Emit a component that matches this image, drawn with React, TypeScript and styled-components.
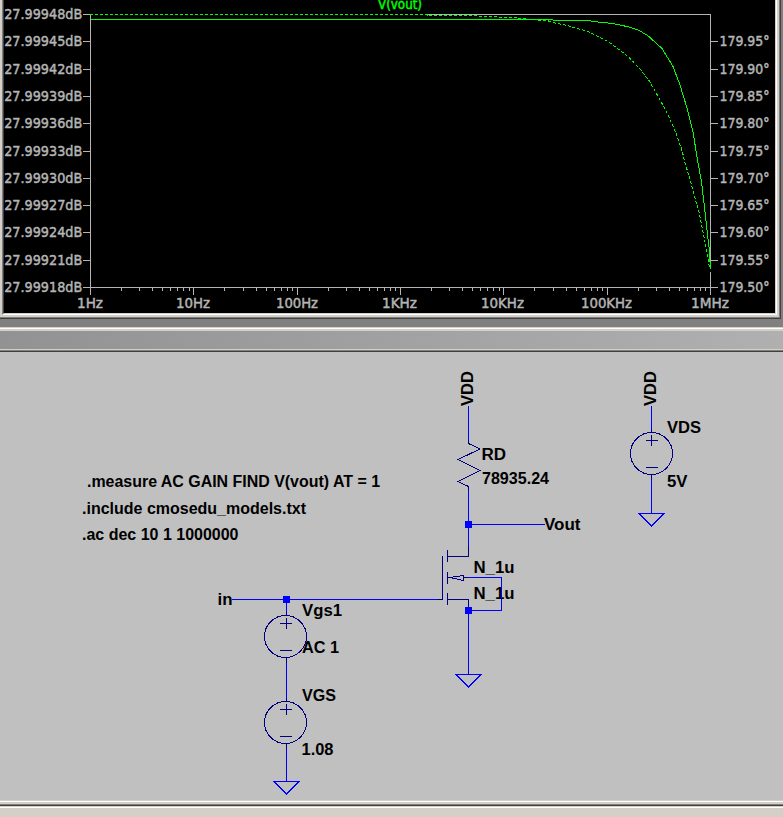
import React from "react";
import styled, { createGlobalStyle } from "styled-components";

const GlobalStyle = createGlobalStyle`
  html, body { margin: 0; padding: 0; background: #808080; overflow: hidden; }
`;

const Desktop = styled.main`
  width: 783px;
  height: 817px;
  display: flex;
  flex-direction: column;
  background: #808080;
  overflow: hidden;
`;

const PlotWindow = styled.section`
  box-sizing: border-box;
  width: 781px;
  height: 319px;
  flex: none;
  border-right: 1px solid #404040;
  border-bottom: 1px solid #404040;
`;

const PlotFrame = styled.div`
  box-sizing: border-box;
  width: 780px;
  height: 318px;
  background: #d4d0c8;
  border-right: 1px solid #808080;
  border-bottom: 1px solid #808080;
  padding: 0 2px 2px 2px;
`;

const PlotBevel = styled.div`
  box-sizing: border-box;
  width: 775px;
  height: 315px;
  border-left: 1px solid #808080;
  border-right: 1px solid #fff;
  border-bottom: 1px solid #fff;
`;

const PlotPane = styled.div`
  box-sizing: border-box;
  width: 773px;
  height: 314px;
  background: #000;
  border-left: 1px solid #404040;
  border-right: 1px solid #d4d0c8;
  border-bottom: 1px solid #d4d0c8;
`;

const Drawing = styled.svg`
  display: block;
  shape-rendering: crispEdges;
`;

const AxisText = styled.text.attrs({ lengthAdjust: "spacingAndGlyphs" })`
  font: 14px "DejaVu Sans", Verdana, sans-serif;
  fill: #b4b4b4;
  stroke: #b4b4b4;
  stroke-width: 0.5px;
`;

const TraceText = styled(AxisText)`
  fill: #00ff00;
  stroke: #00ff00;
`;

const SchematicWindow = styled.section`
  display: flex;
  flex-direction: column;
  margin-top: 8px;
  flex: none;
`;

const Edge = styled.div<{ $color: string; $size?: number }>`
  height: ${(p) => p.$size ?? 1}px;
  background: ${(p) => p.$color};
  flex: none;
`;

const TitleBar = styled.header`
  height: 18px;
  background: linear-gradient(90deg, #929292, #b0b0b0);
`;

const SchematicPane = styled.div`
  height: 448px;
  background: #c0c0c0;
`;

const Label = styled.text.attrs({ lengthAdjust: "spacingAndGlyphs" })`
  font: bold 16px "Liberation Sans", Arial, sans-serif;
  fill: #000;
`;

const StatusBar = styled.footer`
  height: 9px;
  background: #d4d0c8;
`;

const rows = [14, 41, 69, 96, 123, 151, 178, 205, 232, 260, 287];
const gains = ["48", "45", "42", "39", "36", "33", "30", "27", "24", "21", "18"];
const phases = ["95", "90", "85", "80", "75", "70", "65", "60", "55", "50"];

// frequency label, tick x, text start, text width
const decades: [string, number, number, number][] = [
  ["1Hz", 90, 77, 26],
  ["10Hz", 193, 176, 34],
  ["100Hz", 297, 276, 42],
  ["1KHz", 400, 382, 35],
  ["10KHz", 503, 481, 43],
  ["100KHz", 607, 581, 51],
  ["1MHz", 710, 691, 38],
];

function BodePlot() {
  const minor: number[] = [];
  for (let d = 0; d < 6; d++)
    for (let n = 2; n < 10; n++)
      minor.push(Math.floor(90.5 + (d + Math.log10(n)) * 103.33) + 0.5);
  return (
    <Drawing width="771" height="313" viewBox="4 0 771 313">
      <g stroke="#b4b4b4" fill="none">
        <path d="M90.5 15V294 M427 14.5H711 M710.5 14V269 M710.5 272V294 M83 287.5H717" />
        {rows.map((y, i) => (
          <path key={y} d={`M83 ${y + 0.5}h7${i ? "M711 " + (y + 0.5) + "h7" : ""}`} />
        ))}
        {minor.map((x) => (
          <path key={x} d={`M${x} 288v3`} />
        ))}
        {decades.map(([name, x]) => (
          <path key={name} d={`M${x + 0.5} 288v7`} />
        ))}
      </g>
      {rows.map((y, i) => (
        <AxisText key={y} x="4.2" y={y + 5} textLength="78">{`27.999${gains[i]}dB`}</AxisText>
      ))}
      {phases.map((p, i) => (
        <AxisText key={p} x="719.5" y={rows[i + 1] + 5} textLength="50">{`179.${p}°`}</AxisText>
      ))}
      {decades.map(([name, , x, w]) => (
        <AxisText key={name} x={x} y="308" textLength={w}>{name}</AxisText>
      ))}
      <TraceText x="378" y="9" textLength="44">V(vout)</TraceText>
      <g stroke="#00ff00" fill="none">
        <path d="M91 19.5H553 M553 20.5H591" />
        <path d="M591 21.5L605 22.5L618 24.5L628 26.8L638 29.8L648 35.8L662 48.5L673 66.5L680 85L687 108L693 132L697.5 160L701.5 182L704.5 207L707 230L709 247L710.5 269" />
        <path
          strokeDasharray="3 2"
          d="M90 14.5H427V15.5H476L478 16.5H496L499 17.5H517L520 18.5L528 19L541 20.5H547L553 22.5L567 25.5L588 31.5L608 41.5L623 52.5L629 57.5L640 69L649 80.5L658.5 97L667 113L672.5 125L677 136L681.5 149L683.7 157L684.7 162L690.3 180L695.5 200L699.5 214L703 232L706 247L709.5 268"
        />
      </g>
    </Drawing>
  );
}

// `shift` moves the body by a pixel against its leads
function Source({ x, y, shift = 0 }: { x: number; y: number; shift?: number }) {
  return (
    <g stroke="#000080" fill="none">
      <circle cx={x + shift} cy={y} r="21" />
      <path d={`M${x - 5.5 + shift} ${y - 13}h12 M${x} ${y - 18.5}v11 M${x - 5.5 + shift} ${y + 14}h12 M${x} ${y - 24.5}v4 M${x} ${y + 21}v5`} />
    </g>
  );
}

function Ground({ x, y }: { x: number; y: number }) {
  return <path stroke="#0000ff" fill="none" d={`M${x - 12.5} ${y}h25l-12.5 12.5z`} />;
}

const labels: [string, number, number, number][] = [
  [".measure AC GAIN FIND V(vout) AT = 1", 87, 487, 293],
  [".include cmosedu_models.txt", 82, 514, 224],
  [".ac dec 10 1 1000000", 82, 540, 156.5],
  ["RD", 481.5, 460, 24.5],
  ["78935.24", 482, 484, 67],
  ["VDS", 667, 433, 34],
  ["5V", 667, 487, 20.5],
  ["Vout", 544, 530, 36.5],
  ["N_1u", 473.5, 573, 41],
  ["N_1u", 473.5, 599, 41],
  ["in", 217.5, 605, 15],
  ["Vgs1", 302, 616, 40],
  ["AC 1", 302, 653, 37],
  ["VGS", 302, 701, 34],
  ["1.08", 301.5, 755, 32],
];

function Schematic() {
  return (
    <Drawing width="783" height="448" viewBox="0 352 783 448">
      {labels.map(([text, x, y, w]) => (
        <Label key={`${text}${y}`} x={x} y={y} textLength={w}>{text}</Label>
      ))}
      <Label transform="translate(473 406) rotate(-90)" textLength="35">VDD</Label>
      <Label transform="translate(656 406) rotate(-90)" textLength="35">VDD</Label>

      <g stroke="#0000ff" fill="none">
        <path d="M468.5 406V440 M468.5 490V546 M472 524.5H545" />
        <path d="M232 599.5H438 M468 577.5H501.5V610.5H468 M468.5 607V674" />
        <path d="M286.5 600V613 M286.5 662V699 M286.5 748V781" />
        <path d="M651.5 406V430 M651.5 479V513" />
      </g>
      <g stroke="#000080" fill="none">
        <path d="M468.5 440V443.5L480 449L458 459.5L480 470.5L458 481.5L468.5 486.5V490" />
        <path d="M468.5 546V556.5H447 M447.5 550V562 M442.5 556V599.5H437" />
        <path d="M447.5 572V584 M447 577.5H450L463.5 575.5V580.5L450 577.5 M464 577.5H468" />
        <path d="M447.5 593V605 M447 599.5H468.5V607" />
      </g>
      <Source x={651.5} y={453.5} />
      <Source x={286.5} y={636.5} shift={-1} />
      <Source x={286.5} y={722.5} shift={-1} />
      <Ground x={468.5} y={674.5} />
      <Ground x={651.5} y={513.5} />
      <Ground x={286.5} y={781.5} />
      <g fill="#0000ff">
        <rect x="465" y="521" width="7" height="7" />
        <rect x="465" y="607" width="7" height="7" />
        <rect x="283" y="596" width="7" height="7" />
      </g>
    </Drawing>
  );
}

export default function App() {
  return (
    <>
      <GlobalStyle />
      <Desktop>
        <PlotWindow>
          <PlotFrame>
            <PlotBevel>
              <PlotPane>
                <BodePlot />
              </PlotPane>
            </PlotBevel>
          </PlotFrame>
        </PlotWindow>
        <SchematicWindow>
          <Edge $color="#d4d0c8" />
          <Edge $color="#ffffff" />
          <Edge $color="#d4d0c8" $size={2} />
          <TitleBar />
          <Edge $color="#d4d0c8" />
          <Edge $color="#808080" />
          <Edge $color="#404040" />
          <SchematicPane>
            <Schematic />
          </SchematicPane>
          <Edge $color="#d4d0c8" />
          <Edge $color="#ffffff" />
          <Edge $color="#d4d0c8" $size={2} />
          <Edge $color="#808080" />
          <Edge $color="#404040" />
        </SchematicWindow>
        <Edge $color="#d4d0c8" />
        <Edge $color="#ffffff" />
        <StatusBar />
      </Desktop>
    </>
  );
}
